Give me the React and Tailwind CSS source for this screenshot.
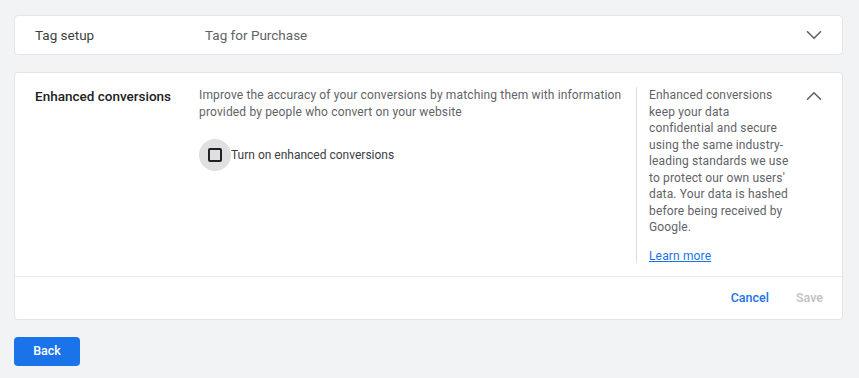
import { ChevronDown, ChevronUp } from 'lucide-react'

export default function App() {
  return (
    <div className="min-h-[378px] w-[859px] bg-[#f1f3f4] pl-[14px] pr-[16px] pt-[15px] font-['Roboto',sans-serif] text-[#3c4043]">
      {/* Tag setup row */}
      <div className="flex h-[40px] items-center rounded-[4px] border border-[#e3e5e8] bg-white">
        <div className="w-[190px] pl-[20px] text-[13.5px] text-[#3c4043]">Tag setup</div>
        <div className="flex-1 text-[13.5px] text-[#5f6368]">Tag for Purchase</div>
        <ChevronDown className="mr-[15px] h-[26px] w-[26px] text-[#5f6368]" strokeWidth={1.5} />
      </div>

      {/* Enhanced conversions card */}
      <div className="mt-[17px] rounded-[4px] border border-[#e3e5e8] bg-white">
        <div className="flex h-[203px] pt-[14px]">
          <div className="w-[184px] pl-[20px] text-[13.5px] font-medium leading-[18px] text-[#202124]">
            Enhanced conversions
          </div>
          <div className="w-[437px] pr-[4px]">
            <p className="text-[12px] leading-[16.5px] tracking-[0.15px] text-[#5f6368]">
              Improve the accuracy of your conversions by matching them with information provided by people who convert on your website
            </p>
            <label className="mt-[19px] flex items-center">
              <span className="flex h-[32px] w-[32px] items-center justify-center rounded-full bg-[#e0e0e0]">
                <span className="h-[14px] w-[14px] rounded-[2px] border-2 border-[#202124]" />
              </span>
              <span className="text-[12px] text-[#3c4043]">Turn on enhanced conversions</span>
            </label>
          </div>
          <div className="mb-[13px] w-[161px] border-l border-[#dadce0] pl-[12px]">
            <p className="text-[12px] leading-[16.5px] tracking-[0.15px] text-[#5f6368]">
              Enhanced conversions keep your data confidential and secure using the same industry-leading standards we use to protect our own users' data. Your data is hashed before being received by Google.
            </p>
            <a href="#" className="mt-[12px] block text-[12px] leading-[16.5px] tracking-[0.15px] text-[#1a73e8] underline">
              Learn more
            </a>
          </div>
          <div className="flex flex-1 justify-end pr-[15px]">
            <ChevronUp className="-mt-[4px] h-[26px] w-[26px] text-[#5f6368]" strokeWidth={1.5} />
          </div>
        </div>
        <div className="flex h-[43px] items-center justify-end gap-[27px] border-t border-[#e8eaed] pr-[19px] text-[12.5px] font-medium">
          <button className="text-[#1a73e8]">Cancel</button>
          <button className="text-[#bdc1c6]">Save</button>
        </div>
      </div>

      <button className="mt-[17px] h-[29px] w-[66px] rounded-[4px] bg-[#1a73e8] text-[12.5px] font-medium text-white">
        Back
      </button>
    </div>
  )
}
